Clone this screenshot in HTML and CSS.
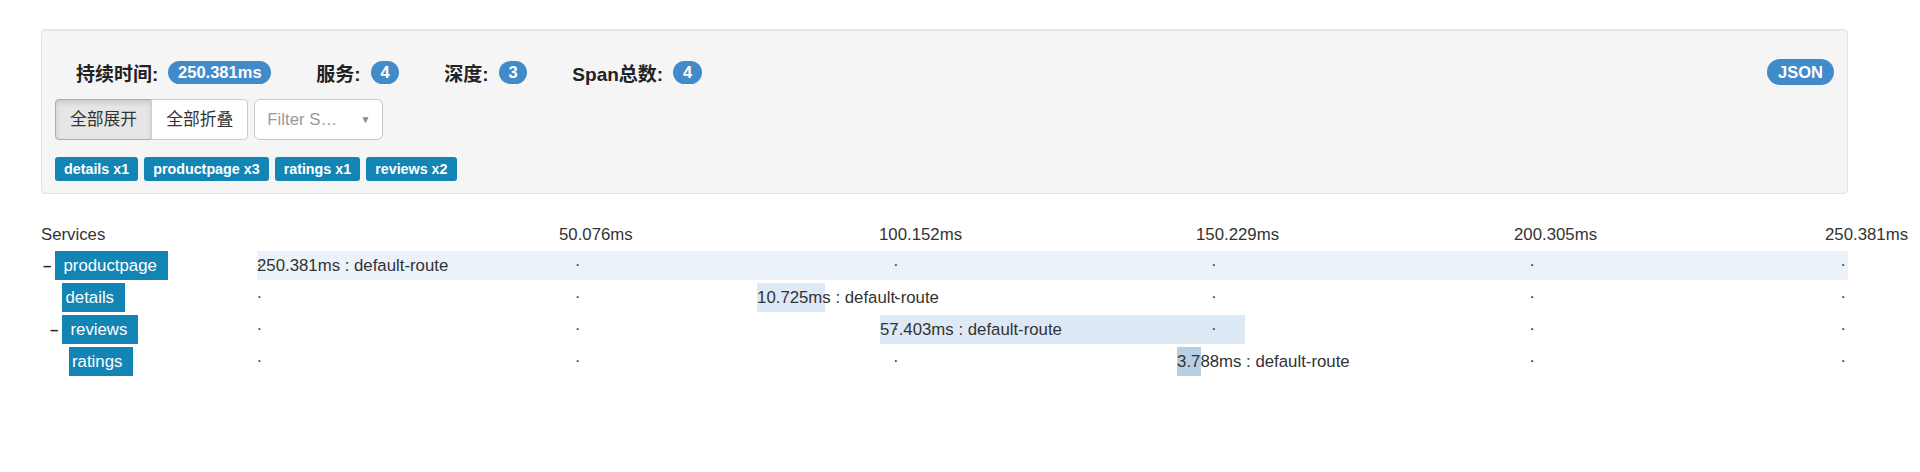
FILE: index.html
```html
<!DOCTYPE html>
<html lang="zh-CN">
<head>
<meta charset="utf-8">
<title>Trace</title>
<link rel="stylesheet" href="styles.css">
</head>
<body>
<div class="page">
  <section class="well">
    <div class="stats">
      <div class="stat"><span class="stat-label">持续时间:</span><span class="badge">250.381ms</span></div>
      <div class="stat"><span class="stat-label">服务:</span><span class="badge">4</span></div>
      <div class="stat"><span class="stat-label">深度:</span><span class="badge">3</span></div>
      <div class="stat"><span class="stat-label">Span总数:</span><span class="badge">4</span></div>
      <a class="badge badge-json">JSON</a>
    </div>
    <div class="controls">
      <div class="btn-group">
        <button class="btn active">全部展开</button>
        <button class="btn">全部折叠</button>
      </div>
      <div class="select"><span class="select-text">Filter S…</span><span class="select-arrow">▼</span></div>
    </div>
    <div class="service-tags">
      <span class="svc-tag">details x1</span>
      <span class="svc-tag">productpage x3</span>
      <span class="svc-tag">ratings x1</span>
      <span class="svc-tag">reviews x2</span>
    </div>
  </section>

  <section class="timeline">
    <div class="tl-header">
      <div class="tl-services">Services</div>
      <div class="tl-axis">
        <span class="tick" style="left:302px">50.076ms</span>
        <span class="tick" style="left:622px">100.152ms</span>
        <span class="tick" style="left:939px">150.229ms</span>
        <span class="tick" style="left:1257px">200.305ms</span>
        <span class="tick" style="left:1568px">250.381ms</span>
      </div>
    </div>

    <div class="tl-row">
      <div class="svc svc-d0"><span class="expander">–</span><span class="svc-name svc-parent">productpage</span></div>
      <div class="track">
        <div class="bar bar-l0" style="margin-left:0%;width:100%"><span class="bar-text">250.381ms : default-route</span></div>
        <span class="marker" style="left:0%">.</span>
        <span class="marker" style="left:20%">.</span>
        <span class="marker" style="left:40%">.</span>
        <span class="marker" style="left:60%">.</span>
        <span class="marker" style="left:80%">.</span>
        <span class="marker" style="left:99.55%">.</span>
      </div>
    </div>

    <div class="tl-row">
      <div class="svc svc-d1"><span class="expander"></span><span class="svc-name">details</span></div>
      <div class="track">
        <div class="bar bar-l1" style="margin-left:31.43%;width:4.283%"><span class="bar-text">10.725ms : default-route</span></div>
        <span class="marker" style="left:0%">.</span>
        <span class="marker" style="left:20%">.</span>
        <span class="marker" style="left:40%">.</span>
        <span class="marker" style="left:60%">.</span>
        <span class="marker" style="left:80%">.</span>
        <span class="marker" style="left:99.55%">.</span>
      </div>
    </div>

    <div class="tl-row">
      <div class="svc svc-d1"><span class="expander">–</span><span class="svc-name svc-parent">reviews</span></div>
      <div class="track">
        <div class="bar bar-l1" style="margin-left:39.16%;width:22.93%"><span class="bar-text">57.403ms : default-route</span></div>
        <span class="marker" style="left:0%">.</span>
        <span class="marker" style="left:20%">.</span>
        <span class="marker" style="left:40%">.</span>
        <span class="marker" style="left:60%">.</span>
        <span class="marker" style="left:80%">.</span>
        <span class="marker" style="left:99.55%">.</span>
      </div>
    </div>

    <div class="tl-row">
      <div class="svc svc-d2"><span class="expander"></span><span class="svc-name">ratings</span></div>
      <div class="track">
        <div class="bar bar-l2" style="margin-left:57.83%;width:1.513%"><span class="bar-text">3.788ms : default-route</span></div>
        <span class="marker" style="left:0%">.</span>
        <span class="marker" style="left:20%">.</span>
        <span class="marker" style="left:40%">.</span>
        <span class="marker" style="left:60%">.</span>
        <span class="marker" style="left:80%">.</span>
        <span class="marker" style="left:99.55%">.</span>
      </div>
    </div>
  </section>
</div>
</body>
</html>
```

FILE: styles.css
```css
* { box-sizing: border-box; }

html, body {
  margin: 0;
  padding: 0;
  background: #fff;
}

body {
  font-family: "Liberation Sans", "Noto Sans CJK SC", Arial, sans-serif;
  font-size: 16.8px;
  color: #333;
}

.page {
  padding: 29px 72px 0 41px;
}

/* ---------- summary well ---------- */
.well {
  background: #f5f5f5;
  border: 1px solid #e3e3e3;
  border-radius: 4px;
  box-shadow: inset 0 1px 1px rgba(0, 0, 0, 0.05);
  padding: 29px 13px 12px 13px;
}

.stats {
  display: flex;
  align-items: center;
  height: 26px;
  padding-left: 21px;
}

.stat {
  display: flex;
  align-items: center;
  gap: 10px;
  margin-right: 45px;
}

.stat-label {
  font-weight: bold;
  font-size: 19px;
  color: #222;
}

.badge {
  display: inline-flex;
  align-items: center;
  justify-content: center;
  height: 23px;
  padding: 0 9.75px;
  border-radius: 12px;
  background: #428bca;
  color: #fff;
  font-weight: bold;
  font-size: 16.5px;
  line-height: 1;
}

.badge-json {
  margin-left: auto;
  height: 26px;
  border-radius: 13px;
  padding: 0 11px;
}

.controls {
  display: flex;
  margin-top: 14px;
  height: 41px;
}

.btn-group {
  display: flex;
}

.btn {
  font-family: inherit;
  font-size: 16.8px;
  height: 41px;
  padding: 0 14px;
  border: 1px solid #ccc;
  background: #fff;
  color: #333;
  line-height: 39px;
  margin: 0;
}

.btn:first-child {
  border-radius: 4px 0 0 4px;
}

.btn:last-child {
  border-radius: 0 4px 4px 0;
  margin-left: -1px;
}

.btn.active {
  background: #e6e6e6;
  border-color: #adadad;
  box-shadow: inset 0 3px 5px rgba(0, 0, 0, 0.125);
}

.select {
  display: flex;
  align-items: center;
  justify-content: space-between;
  margin-left: 6px;
  width: 129px;
  height: 41px;
  padding: 0 12px 0 12px;
  background: #fff;
  border: 1px solid #c8c8c8;
  border-radius: 6px;
  color: #999;
}

.select-text {
  white-space: nowrap;
}

.select-arrow {
  font-size: 10px;
  color: #888;
}

.service-tags {
  display: flex;
  gap: 6px;
  margin-top: 17px;
  height: 24px;
}

.svc-tag {
  display: inline-flex;
  align-items: center;
  height: 24px;
  padding: 0 9px;
  border-radius: 3px;
  background: #1385b4;
  color: #fff;
  font-weight: bold;
  font-size: 14.3px;
}

/* ---------- timeline ---------- */
.timeline {
  margin-top: 30px;
}

.tl-header {
  display: grid;
  grid-template-columns: 216px 1591px;
  height: 22px;
  line-height: 22px;
  margin-bottom: 5px;
}

.tl-axis {
  position: relative;
}

.tick {
  position: absolute;
  top: 0;
  white-space: nowrap;
}

.tl-row {
  display: grid;
  grid-template-columns: 216px 1591px;
  height: 32px;
}

.svc {
  display: flex;
  align-items: flex-start;
  height: 29px;
}

.svc-d0 { padding-left: 2px; }
.svc-d1 { padding-left: 9px; }
.svc-d2 { padding-left: 15.5px; }

.expander {
  flex: none;
  width: 12px;
  font-weight: bold;
  font-size: 15px;
  line-height: 29px;
  color: #222;
}

.svc-name {
  height: 29px;
  line-height: 29px;
  padding: 0 11px 0 3.5px;
  background: #1385b4;
  color: #fff;
  white-space: nowrap;
}

.svc-parent {
  padding-left: 8.5px;
}

.track {
  position: relative;
  height: 29px;
}

.bar {
  height: 29px;
  line-height: 29px;
  white-space: nowrap;
}

.bar-l0 { background: #ecf2f9; }
.bar-l1 { background: #dde9f5; }
.bar-l2 { background: #b8d0e6; }

.bar-text {
  color: #333;
}

.marker {
  position: absolute;
  top: 0;
  line-height: 20px;
  color: #333;
}
```
